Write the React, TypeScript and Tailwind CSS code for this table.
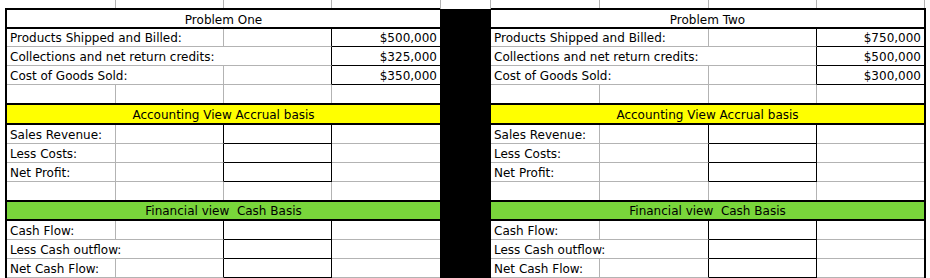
import React from 'react';

type Cols = { a: string; b: string; c: string; d: string; ab: string; abc: string };

const LEFT_COLS: Cols = {
  a: 'w-[109px]',
  b: 'w-[108px]',
  c: 'w-[108px]',
  d: 'w-[108px]',
  ab: 'w-[217px]',
  abc: 'w-[325px]',
};

const RIGHT_COLS: Cols = {
  a: 'w-[109px]',
  b: 'w-[109px]',
  c: 'w-[108px]',
  d: 'w-[107px]',
  ab: 'w-[218px]',
  abc: 'w-[326px]',
};

// gridline / box styles
const grid = 'border-[#b3b3b3]';
const cell = 'shrink-0 flex items-end whitespace-nowrap leading-[14px] pb-[1px]';
const label = 'pl-[3px]';
const value = 'justify-end pr-[3px]';

function Row({ h, children }: { h: string; children: React.ReactNode }) {
  return <div className={`flex ${h}`}>{children}</div>;
}

function BandRow({ text, color, h }: { text: string; color: string; h: string }) {
  return (
    <div className={`flex items-end justify-center border-y-2 border-black leading-[14px] pb-[1px] whitespace-pre ${color} ${h}`}>
      {text}
    </div>
  );
}

// label row with the boxed cell in column C (accounting / cash rows)
function BoxRow({ cols, text, span }: { cols: Cols; text: string; span?: boolean }) {
  return (
    <Row h="h-[19px]">
      {span ? (
        <div className={`${cell} ${label} ${cols.ab} border-r border-b ${grid} border-r-black`}>{text}</div>
      ) : (
        <>
          <div className={`${cell} ${label} ${cols.a} border-r border-b ${grid}`}>{text}</div>
          <div className={`${cell} ${cols.b} border-r border-b ${grid} border-r-black`} />
        </>
      )}
      <div className={`${cell} ${cols.c} border-r border-b border-black`} />
      <div className={`${cell} ${cols.d} border-b ${grid}`} />
    </Row>
  );
}

function EmptyRow({ cols }: { cols: Cols }) {
  return (
    <Row h="h-[18px]">
      <div className={`${cell} ${cols.a} border-r ${grid}`} />
      <div className={`${cell} ${cols.b} border-r ${grid}`} />
      <div className={`${cell} ${cols.c} border-r ${grid}`} />
      <div className={`${cell} ${cols.d}`} />
    </Row>
  );
}

function Table({
  title,
  values,
  cols,
  side,
}: {
  title: string;
  values: string[];
  cols: Cols;
  side: 'left' | 'right';
}) {
  return (
    <div className="flex flex-col w-[435px] shrink-0">
      {/* partial row above the table */}
      <div className="flex h-[9px]">
        {side === 'left' && <div className="w-[2px] shrink-0" />}
        <div className={`${cols.a} shrink-0 border-r ${grid}`} />
        <div className={`${cols.b} shrink-0 border-r ${grid}`} />
        <div className={`${cols.c} shrink-0 border-r ${grid}`} />
        <div className={`${cols.d} shrink-0`} />
        {side === 'right' && <div className={`w-[2px] shrink-0 border-l ${grid}`} />}
      </div>

      <div className={side === 'left' ? 'border-l-2 border-black' : 'border-r-2 border-black'}>
        <div className="flex h-[21px] items-end justify-center border-y-2 border-black leading-[14px]">{title}</div>

        <Row h="h-[18px]">
          <div className={`${cell} ${label} ${cols.ab} border-r border-b ${grid}`}>Products Shipped and Billed:</div>
          <div className={`${cell} ${cols.c} border-r border-b ${grid} border-r-black`} />
          <div className={`${cell} ${value} ${cols.d} border-b border-black`}>{values[0]}</div>
        </Row>
        <Row h="h-[19px]">
          <div className={`${cell} ${label} ${cols.abc} border-r border-b ${grid} border-r-black`}>
            Collections and net return credits:
          </div>
          <div className={`${cell} ${value} ${cols.d} border-b border-black`}>{values[1]}</div>
        </Row>
        <Row h="h-[19px]">
          <div className={`${cell} ${label} ${cols.ab} border-r border-b ${grid}`}>Cost of Goods Sold:</div>
          <div className={`${cell} ${cols.c} border-r border-b ${grid} border-r-black`} />
          <div className={`${cell} ${value} ${cols.d} border-b border-black`}>{values[2]}</div>
        </Row>
        <EmptyRow cols={cols} />

        <BandRow text="Accounting View Accrual basis" color="bg-[#ffff00]" h="h-[22px]" />
        <BoxRow cols={cols} text="Sales Revenue:" />
        <BoxRow cols={cols} text="Less Costs:" />
        <BoxRow cols={cols} text="Net Profit:" />
        <EmptyRow cols={cols} />

        <BandRow text="Financial view  Cash Basis" color="bg-[#79d63b]" h="h-[21px]" />
        <BoxRow cols={cols} text="Cash Flow:" />
        <BoxRow cols={cols} text="Less Cash outflow:" span />
        <BoxRow cols={cols} text="Net Cash Flow:" />
      </div>
    </div>
  );
}

export default function App() {
  return (
    <div className="w-[930px] h-[278px] overflow-hidden bg-white text-black text-[12px] font-['DejaVu_Sans',sans-serif] flex">
      <div className="w-[5px] shrink-0" />
      <Table title="Problem One" values={['$500,000', '$325,000', '$350,000']} cols={LEFT_COLS} side="left" />

      {/* black separator column */}
      <div className="w-[51px] shrink-0 flex flex-col">
        <div className={`h-[9px] shrink-0 border-x ${grid}`} />
        <div className="flex-1 bg-black" />
      </div>

      <Table title="Problem Two" values={['$750,000', '$500,000', '$300,000']} cols={RIGHT_COLS} side="right" />
    </div>
  );
}
